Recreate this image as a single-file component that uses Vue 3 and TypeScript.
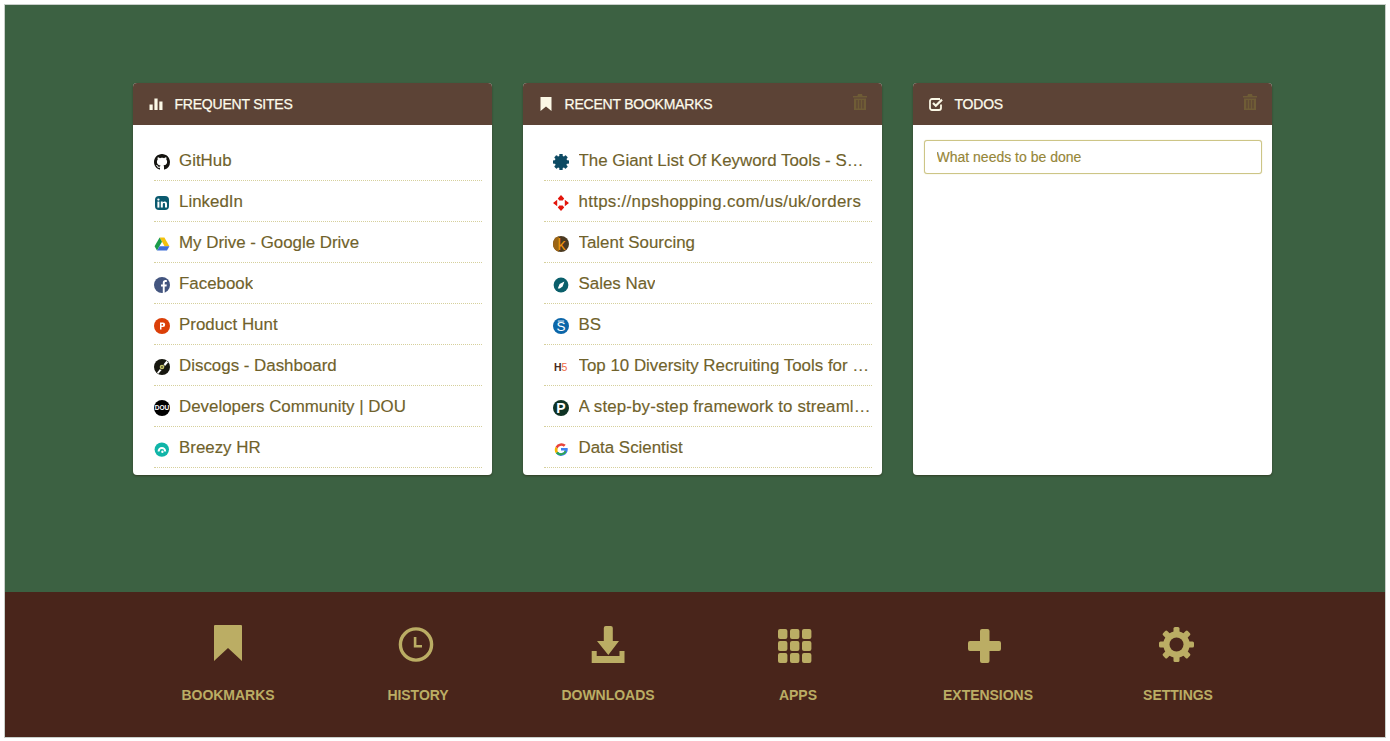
<script setup lang="ts">
type Link = { title: string; icon: string; track?: string }

const icons: Record<string, string> = {
  github: '<path fill="#14130f" d="M8 0C3.58 0 0 3.58 0 8c0 3.54 2.29 6.53 5.47 7.59.4.07.55-.17.55-.38 0-.19-.01-.82-.01-1.49-2.01.37-2.53-.49-2.69-.94-.09-.23-.48-.94-.82-1.13-.28-.15-.68-.52-.01-.53.63-.01 1.08.58 1.23.82.72 1.21 1.87.87 2.33.66.07-.52.28-.87.51-1.07-1.78-.2-3.64-.89-3.64-3.95 0-.87.31-1.59.82-2.15-.08-.2-.36-1.02.08-2.12 0 0 .67-.21 2.2.82.64-.18 1.32-.27 2-.27.68 0 1.36.09 2 .27 1.53-1.04 2.2-.82 2.2-.82.44 1.1.16 1.92.08 2.12.51.56.82 1.27.82 2.15 0 3.07-1.87 3.75-3.65 3.95.29.25.54.73.54 1.48 0 1.07-.01 1.93-.01 2.2 0 .21.15.46.55.38A8.013 8.013 0 0 0 16 8c0-4.42-3.58-8-8-8z"/>',
  linkedin: '<rect x="1" y="1" width="14" height="14" rx="4" fill="#0a5a6f"/><rect x="3.400" y="6.600" width="2" height="6" fill="#fff"/><circle cx="4.400" cy="4.600" r="1.150" fill="#fff"/><path d="M6.800 6.600h1.900v.9c.5-.7 1.200-1.100 2.100-1.100 1.500 0 2.200 1 2.200 2.600v3.600h-2V9.400c0-.8-.3-1.300-1-1.300s-1.200.5-1.200 1.300v3.200h-2z" fill="#fff"/>',
  drive: '<path d="M5.600 1.600h4.800l5 8.600h-4.800z" fill="#f4c20d"/><path d="M5.600 1.600L.6 10.200 3 14.400l5-8.600z" fill="#1b9c4b"/><path d="M3 14.400h10l2.400-4.200H5.500z" fill="#3f6fd8"/>',
  facebook: '<circle cx="8" cy="8" r="8" fill="#43557f"/><path d="M8.800 16V9.600H7V7.400h1.800V5.800c0-1.800 1.100-2.800 2.700-2.800h1.300v2.100h-1c-.8 0-1.100.4-1.100 1.100v1.200h2.100l-.3 2.200h-1.800V16z" fill="#fff"/>',
  producthunt: '<circle cx="8" cy="8" r="8" fill="#db3f08"/><path d="M6 4.600h3a2.200 2.200 0 0 1 0 4.400H7.500v2.600H6z" fill="#fff"/><rect x="7.500" y="6" width="1.500" height="1.600" fill="#db3f08"/>',
  discogs: '<circle cx="8" cy="8" r="8" fill="#17170f"/><path d="M3 13.800L12.400 1.800l1.700 1.700L4.400 14.800z" fill="#fff"/><circle cx="8" cy="8" r="2.900" fill="#17170f"/><circle cx="8" cy="8" r="2.300" fill="#c8c66b"/><circle cx="8" cy="8" r=".8" fill="#17170f"/>',
  dou: '<circle cx="8" cy="8" r="8" fill="#000"/><text x="8" y="10.400" text-anchor="middle" font-family="Liberation Sans" font-weight="700" font-size="6.600" fill="#fff">DOU</text>',
  breezy: '<circle cx="7.800" cy="8.600" r="7.200" fill="#10b5a8"/><path d="M4.600 10.400a3.300 3.300 0 0 1 6.600 0" fill="none" stroke="#fff" stroke-width="2"/><circle cx="8.400" cy="10.800" r="1.200" fill="#fff"/>',
  keyword: '<g fill="#0d4a63"><circle cx="8" cy="8" r="6.200"/><rect x="6.300" width="3.400" height="16" rx=".6"/><rect x="6.300" width="3.400" height="16" rx=".6" transform="rotate(45 8 8)"/><rect x="6.300" width="3.400" height="16" rx=".6" transform="rotate(90 8 8)"/><rect x="6.300" width="3.400" height="16" rx=".6" transform="rotate(135 8 8)"/></g>',
  np: '<path d="M8 0l3.200 3.400-1.500 2.200H6.300L4.800 3.400zM8 16l-3.200-3.400 1.500-2.200h3.400l1.500 2.200zM0 8l4.200-3.200v6.400zM16 8l-4.200 3.200V4.800z" fill="#e3160c"/>',
  talent: '<circle cx="8" cy="8" r="8" fill="#4b3a20"/><path d="M0 8a8 8 0 0 1 6-7.700V15.700A8 8 0 0 1 0 8z" fill="#9c6414"/><text x="8.400" y="14" text-anchor="middle" font-family="Liberation Sans" font-size="16" fill="#ef930d">k</text>',
  sales: '<circle cx="8" cy="8" r="7.400" fill="#0a5f6b"/><path d="M11.400 4.400L9.600 9.400 6.800 11.600 4.800 11.400 6.600 7z" fill="#fff"/>',
  bs: '<circle cx="8" cy="8" r="8" fill="#0b66a9"/><text x="8" y="12.800" text-anchor="middle" font-family="Liberation Sans" font-size="13.500" fill="#fff">S</text><rect x="4.800" y="2.600" width="6.400" height=".9" fill="#fff"/>',
  h5: '<text x="1" y="12" font-family="Liberation Sans" font-weight="700" font-size="10.500" fill="#4a2b22">H</text><text x="8.400" y="12" font-family="Liberation Sans" font-size="10.500" fill="#ef6a44">5</text>',
  pf: '<circle cx="8" cy="8" r="8" fill="#0f3324"/><text x="8" y="13" text-anchor="middle" font-family="Liberation Sans" font-weight="700" font-size="14" fill="#fff">P</text>',
  google: '<path d="M14.600 6.900H8v2.500h3.800a4 4 0 0 1-6.900 1.300L2.800 12.300a6.700 6.700 0 0 0 11.800-5.400z" fill="#3e82f1"/><path d="M4.900 10.700a3.900 3.900 0 0 1-.2-3.300L2.600 5.700a6.700 6.700 0 0 0 .2 6.600z" fill="#f4b400"/><path d="M4.700 7.400a3.900 3.900 0 0 1 6.100-1.700l1.900-1.900A6.700 6.700 0 0 0 2.600 5.700z" fill="#e8433a"/><path d="M4.900 10.700a3.900 3.900 0 0 0 6.900-1.300L13.500 11a6.700 6.700 0 0 1-10.700 1.300z" fill="#2fa84f"/>',
}

const frequent: Link[] = [
  { title: 'GitHub', icon: 'github' },
  { title: 'LinkedIn', icon: 'linkedin' },
  { title: 'My Drive - Google Drive', icon: 'drive' },
  { title: 'Facebook', icon: 'facebook' },
  { title: 'Product Hunt', icon: 'producthunt' },
  { title: 'Discogs - Dashboard', icon: 'discogs' },
  { title: 'Developers Community | DOU', icon: 'dou' },
  { title: 'Breezy HR', icon: 'breezy' },
]

const recent: Link[] = [
  { title: 'The Giant List Of Keyword Tools - SEO Tools and More', icon: 'keyword' },
  { title: 'https://npshopping.com/us/uk/orders', icon: 'np', track: '0.3px' },
  { title: 'Talent Sourcing', icon: 'talent' },
  { title: 'Sales Nav', icon: 'sales' },
  { title: 'BS', icon: 'bs' },
  { title: 'Top 10 Diversity Recruiting Tools for 2019', icon: 'h5' },
  { title: 'A step-by-step framework to streamline hiring', icon: 'pf', track: '0.14px' },
  { title: 'Data Scientist', icon: 'google' },
]

const dock = ['Bookmarks', 'History', 'Downloads', 'Apps', 'Extensions', 'Settings']
const gearTeeth = [0, 45, 90, 135]
const dots = [0, 1, 2]
</script>

<template>
  <div class="frame">
    <main class="stage">
      <section class="card">
        <header class="head">
          <svg class="head-icon" viewBox="0 0 14 14"><path d="M.5 7.500h3.200V13H.5zM5.400 1.500h3.200V13H5.400zM10.300 4.500h3.200V13h-3.200z" fill="#fbf8e6" /></svg>
          <h2>Frequent Sites</h2>
        </header>
        <ul class="links">
          <li v-for="l in frequent" :key="l.title">
            <svg class="fav" viewBox="0 0 16 16" v-html="icons[l.icon]"></svg>
            <span class="label">{{ l.title }}</span>
          </li>
        </ul>
      </section>

      <section class="card">
        <header class="head">
          <svg class="head-icon" viewBox="0 0 14 14"><path d="M1.500 0h11v14L7 9.400 1.500 14z" fill="#fbf8e6" /></svg>
          <h2>Recent Bookmarks</h2>
          <svg class="trash" viewBox="0 0 14 16"><path d="M5 0h4l.6 2H14v1.500H0V2h4.400zM1 4.500h12V16H1zM3.400 6v8.500h1.200V6zM6.400 6v8.500h1.200V6zM9.400 6v8.500h1.200V6z" fill-rule="evenodd" fill="#6f5c36" /></svg>
        </header>
        <ul class="links inset">
          <li v-for="l in recent" :key="l.title">
            <svg class="fav" viewBox="0 0 16 16" v-html="icons[l.icon]"></svg>
            <span class="label" :style="{ letterSpacing: l.track }">{{ l.title }}</span>
          </li>
        </ul>
      </section>

      <section class="card">
        <header class="head">
          <svg class="head-icon" viewBox="0 0 14 14"><path d="M12 7.500v3.500a2 2 0 0 1-2 2H3a2 2 0 0 1-2-2V4a2 2 0 0 1 2-2h8" fill="none" stroke="#fbf8e6" stroke-width="1.800" /><path d="M4 6l2.800 2.800L13 2.600" fill="none" stroke="#fbf8e6" stroke-width="2.200" /></svg>
          <h2>Todos</h2>
          <svg class="trash" viewBox="0 0 14 16"><path d="M5 0h4l.6 2H14v1.500H0V2h4.400zM1 4.500h12V16H1zM3.400 6v8.500h1.200V6zM6.400 6v8.500h1.200V6zM9.400 6v8.500h1.200V6z" fill-rule="evenodd" fill="#6f5c36" /></svg>
        </header>
        <div class="todo-body">
          <input class="todo-input" type="text" placeholder="What needs to be done" />
        </div>
      </section>
    </main>

    <footer class="dock">
      <div class="dock-row">
        <a v-for="(name, i) in dock" :key="name" class="dock-item">
          <svg class="dock-icon" viewBox="0 0 40 40">
            <path v-if="i === 0" d="M6 2a1 1 0 0 1 1-1h26a1 1 0 0 1 1 1v35L20 24 6 37z" fill="#bbad64" />
            <g v-else-if="i === 1">
              <circle cx="18" cy="20.500" r="15.600" fill="none" stroke="#bbad64" stroke-width="3.400" />
              <path d="M15.800 13h2.600v8h5.600v2.600h-8.200z" fill="#bbad64" />
            </g>
            <path v-else-if="i === 2" d="M15.800 4a2 2 0 0 1 2-2h5a2 2 0 0 1 2 2v13h6.200L20.300 31 9 17h6.800zM3.700 27h5v5h22.800v-5h5v12H3.700z" fill="#bbad64" />
            <g v-else-if="i === 3">
              <template v-for="r in dots" :key="r">
                <rect v-for="c in dots" :key="c" :x="c * 12" :y="5 + r * 12" width="9.400" height="10" rx="2" fill="#bbad64" />
              </template>
            </g>
            <path v-else-if="i === 4" d="M12 7a2 2 0 0 1 2-2h5.500a2 2 0 0 1 2 2v10H31a2 2 0 0 1 2 2v6a2 2 0 0 1-2 2h-9.500v10a2 2 0 0 1-2 2H14a2 2 0 0 1-2-2V27H2a2 2 0 0 1-2-2v-6a2 2 0 0 1 2-2h10z" fill="#bbad64" />
            <g v-else>
              <rect v-for="a in gearTeeth" :key="a" x="15.500" y="3" width="6" height="35" rx="1.500" fill="#bbad64" :transform="`rotate(${a} 18.500 20.500)`" />
              <circle cx="18.500" cy="20.500" r="13.200" fill="#bbad64" />
              <circle cx="18.500" cy="20.500" r="7" fill="#49251b" />
            </g>
          </svg>
          <span class="dock-label">{{ name }}</span>
        </a>
      </div>
    </footer>
  </div>
</template>

<style>
html,
body {
  margin: 0;
  background: #fff;
}
</style>

<style scoped>
.frame {
  box-sizing: border-box;
  height: 741px;
  margin: 0;
  padding: 4px 4px 3px;
  display: flex;
  flex-direction: column;
  font-family: "Liberation Sans", Arial, sans-serif;
}

.stage {
  flex: 1;
  display: flex;
  justify-content: center;
  align-items: flex-start;
  gap: 31px;
  padding: 78px 0 0 15px;
  background: #3c6142;
  border: 1px solid #c9cfca;
  border-bottom: 0;
}

.card {
  width: 359px;
  height: 392px;
  border-radius: 4px;
  overflow: hidden;
  background: #fff;
  box-shadow: 0 1px 2px rgba(40, 30, 10, 0.5);
}

.head {
  height: 42px;
  display: flex;
  align-items: center;
  padding: 0 15px 0 16px;
  background: #5c4336;
}

.head h2 {
  flex: 1;
  margin: 0;
  font-size: 14px;
  font-weight: 400;
  letter-spacing: -0.22px;
  text-transform: uppercase;
  color: #fdfbec;
  -webkit-text-stroke: 0.25px #fdfbec;
}

.head-icon {
  width: 14px;
  height: 14px;
  margin-right: 11.500px;
}

.trash {
  width: 14px;
  height: 16px;
  margin-top: -4px;
}

.links {
  list-style: none;
  margin: 0;
  padding: 15px 10.500px 0 20.500px;
}

.links li {
  box-sizing: border-box;
  height: 41px;
  display: flex;
  align-items: center;
  padding-bottom: 1px;
  border-bottom: 1px dotted #d6d09c;
}

.links.inset li {
  padding-left: 9px;
  padding-right: 0;
}

.fav {
  flex: none;
  width: 16px;
  height: 16px;
  margin: 5px 9.500px 0 0;
}

.links.inset .fav {
  margin-right: 10px;
}

.label {
  min-width: 0;
  overflow: hidden;
  white-space: nowrap;
  text-overflow: ellipsis;
  font-size: 16.900px;
  color: #70622b;
  line-height: 22px;
  margin-top: 2px;
  -webkit-text-stroke: 0.15px #70622b;
}

.todo-body {
  padding: 15px 10.500px 0 10.500px;
}

.todo-input {
  box-sizing: border-box;
  display: block;
  width: 100%;
  height: 34px;
  padding: 0 12px;
  border: 1px solid #cdc586;
  border-radius: 3px;
  outline: 0;
  box-shadow: 0 0 1px #cdc586;
  font-family: inherit;
  font-size: 14px;
  background: #fff;
  -webkit-text-stroke: 0.15px #968638;
}

.todo-input::placeholder {
  color: #968638;
  opacity: 1;
}

.dock {
  height: 145px;
  flex: none;
  background: #49251b;
  border: 1px solid #c9cfca;
  border-top: 0;
  display: flex;
  justify-content: center;
  padding-left: 16px;
}

.dock-row {
  width: 1140px;
  display: grid;
  grid-template-columns: repeat(6, 190px);
}

.dock-item {
  display: flex;
  flex-direction: column;
  align-items: center;
  padding-top: 32px;
}

.dock-icon {
  width: 40px;
  height: 40px;
  overflow: visible;
}

.dock-label {
  margin-top: 23px;
  font-size: 14px;
  font-weight: 700;
  letter-spacing: -0.03px;
  text-transform: uppercase;
  color: #bbad64;
}
</style>
